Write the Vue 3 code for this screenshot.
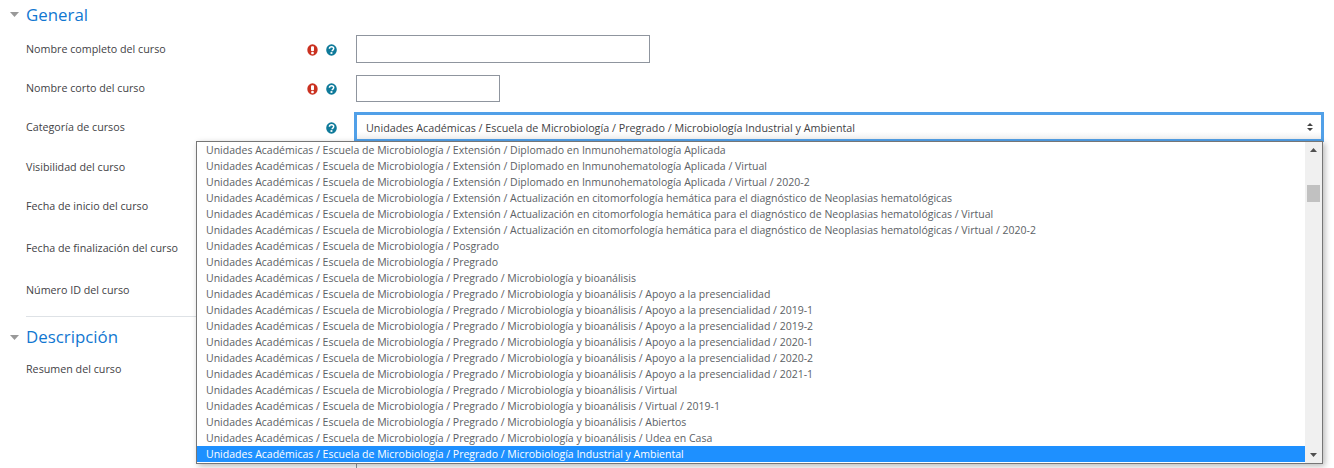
<script setup>
const base = 'Unidades Académicas / Escuela de Microbiología / '
const ext = 'Extensión / '
const dip = 'Diplomado en Inmunohematología Aplicada'
const act = 'Actualización en citomorfología hemática para el diagnóstico de Neoplasias hematológicas'
const bio = 'Pregrado / Microbiología y bioanálisis'
const apo = bio + ' / Apoyo a la presencialidad'
const options = [
  ext + dip, ext + dip + ' / Virtual', ext + dip + ' / Virtual / 2020-2',
  ext + act, ext + act + ' / Virtual', ext + act + ' / Virtual / 2020-2',
  'Posgrado', 'Pregrado', bio, apo,
  apo + ' / 2019-1', apo + ' / 2019-2', apo + ' / 2020-1', apo + ' / 2020-2', apo + ' / 2021-1',
  bio + ' / Virtual', bio + ' / Virtual / 2019-1', bio + ' / Abiertos', bio + ' / Udea en Casa',
  'Pregrado / Microbiología Industrial y Ambiental'
].map(o => base + o)
const selectedIndex = options.length - 1
const rows = [
  { label: 'Nombre completo del curso', req: true, help: true, cls: 'r1' },
  { label: 'Nombre corto del curso', req: true, help: true, cls: 'r2' },
  { label: 'Categoría de cursos', help: true, cls: 'r3' },
  { label: 'Visibilidad del curso', cls: 'r4' },
  { label: 'Fecha de inicio del curso', cls: 'r5' },
  { label: 'Fecha de finalización del curso', cls: 'r6' },
  { label: 'Número ID del curso', cls: 'r7' }
]
</script>

<template>
  <div class="page">
    <div class="head head-general">
      <svg class="caret" width="9" height="5" viewBox="0 0 9 5"><path d="M0 0h9L4.5 5z" fill="#999"/></svg>
      <h3>General</h3>
    </div>

    <div v-for="(r, i) in rows" :key="r.label" class="row" :class="r.cls">
      <div class="label">{{ r.label }}</div>
      <div class="icons">
        <svg v-if="r.req" class="ico" width="11" height="12" viewBox="0 0 11 12">
          <ellipse cx="5.5" cy="6" rx="5.2" ry="5.7" fill="#ca3120"/>
          <rect x="4" y="2.2" width="3" height="5" rx="1" fill="#fff"/>
          <rect x="4.2" y="8" width="2.6" height="2.2" rx=".6" fill="#fff"/>
        </svg>
        <svg v-if="r.help" class="ico help" width="11" height="12" viewBox="0 0 11 12">
          <ellipse cx="5.5" cy="6" rx="5.3" ry="5.7" fill="#0f7a9a"/>
          <path d="M3.4 4.7C3.5 3.4 4.4 2.8 5.6 2.8c1.2 0 2.1.7 2.1 1.8 0 1.5-1.6 1.4-1.6 2.6" fill="none" stroke="#fff" stroke-width="1.5"/>
          <rect x="4.5" y="8.1" width="1.9" height="1.8" fill="#fff"/>
        </svg>
      </div>
      <input v-if="i === 0" class="text long" type="text" />
      <input v-else-if="i === 1" class="text short" type="text" />
      <div v-else-if="i === 2" class="select">
        <span>{{ options[selectedIndex] }}</span>
        <svg width="6" height="8" viewBox="0 0 6 8"><path d="M0 3l3-3 3 3zM0 5l3 3 3-3z" fill="#444"/></svg>
      </div>
    </div>

    <div class="rule"></div>

    <div class="head head-desc">
      <svg class="caret" width="9" height="5" viewBox="0 0 9 5"><path d="M0 0h9L4.5 5z" fill="#999"/></svg>
      <h3>Descripción</h3>
    </div>
    <div class="row r8">
      <div class="label">Resumen del curso</div>
      <div class="icons"></div>
      <div class="editor"></div>
    </div>

    <div class="dropdown">
      <ul class="list">
        <li v-for="(o, i) in options" :key="o" :class="{ on: i === selectedIndex }">{{ o }}</li>
      </ul>
      <div class="bar">
        <svg class="arrow" width="7" height="4" viewBox="0 0 7 4"><path d="M0 4l3.5-4 3.5 4z" fill="#505050"/></svg>
        <div class="thumb"></div>
        <svg class="arrow down" width="7" height="4" viewBox="0 0 7 4"><path d="M0 0l3.5 4 3.5-4z" fill="#505050"/></svg>
      </div>
    </div>
  </div>
</template>

<style scoped>
.page {
  position: relative;
  width: 1334px;
  height: 468px;
  overflow: hidden;
  background: #fff;
  font-family: "Open Sans", "Noto Sans", sans-serif;
  font-size: 10.73px;
  color: #3f4245;
  box-sizing: border-box;
  padding-left: 10px;
}
.head { display: flex; align-items: center; gap: 7px; }
.head h3 { margin: 0; font-weight: 400; font-size: 16.85px; line-height: 24px; color: #1177d1; }
.head-general { height: 29px; }
.head-desc { height: 24px; margin-top: 8px; }
.row { display: flex; align-items: center; }
.label { width: 270px; padding-left: 16px; box-sizing: border-box; flex: none; line-height: 16px; }
.icons { width: 76px; flex: none; display: flex; justify-content: flex-end; gap: 8px; padding-right: 19px; box-sizing: border-box; }
.ico { display: block; margin-top: 1px; }
.r1 { height: 28px; margin-top: 6px; }
.r2 { height: 27px; margin-top: 12px; }
.r2 .label { margin-bottom: 2px; }
.r3 { height: 30px; margin-top: 10px; }
.r4 { height: 16px; margin-top: 17px; }
.r5 { height: 16px; margin-top: 23px; }
.r6 { height: 16px; margin-top: 26px; }
.r7 { height: 16px; margin-top: 26px; }
.r8 { margin-top: 12px; align-items: flex-start; }
.text { box-sizing: border-box; border: 1px solid #8f959e; background: #fff; padding: 0; outline: 0; }
.long { width: 294px; height: 28px; }
.short { width: 144px; height: 27px; }
.select {
  box-sizing: border-box;
  width: 970px;
  height: 30px;
  margin-left: -2px;
  border: 3px solid #51a0e8;
  background: linear-gradient(#fff 70%, #f0f0f0);
  display: flex;
  align-items: center;
  justify-content: space-between;
  padding: 0 8px 0 9px;
  font-size: 10.78px;
}
.rule { height: 1px; background: #dee2e6; margin: 18px 0 0 16px; width: 900px; }
.editor { width: 0; height: 120px; border-left: 1px solid #8f959e; }
.dropdown {
  position: absolute;
  left: 196px;
  top: 141px;
  width: 1127px;
  height: 323px;
  box-sizing: border-box;
  border: 1px solid #767676;
  background: #fff;
  box-shadow: 2px 2px 6px rgba(0, 0, 0, .28);
  display: flex;
  font-size: 10.52px;
}
.list { list-style: none; margin: 0; padding: 0; flex: 1; min-width: 0; }
.list li { height: 16px; line-height: 16px; padding-left: 9px; white-space: nowrap; color: #5c6165; }
.list li.on { background: #1e90ff; color: #fff; }
.bar { width: 17px; flex: none; background: #f0f0f0; position: relative; }
.arrow { position: absolute; left: 5px; top: 6px; display: block; }
.arrow.down { top: auto; bottom: 6px; }
.thumb { position: absolute; left: 2px; top: 43px; width: 13px; height: 17px; background: #c1c1c1; }
</style>
